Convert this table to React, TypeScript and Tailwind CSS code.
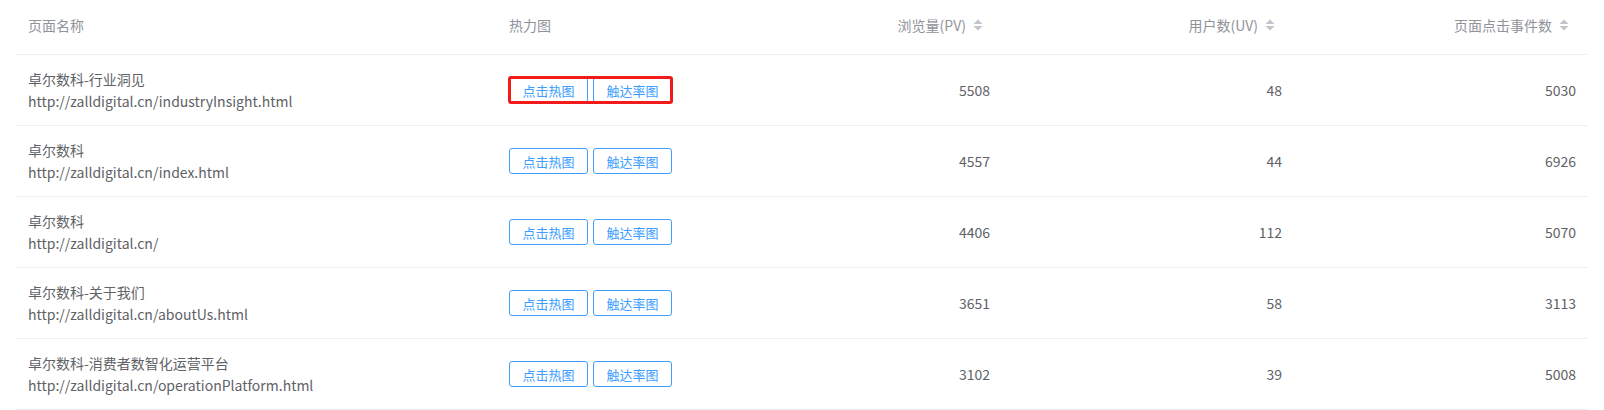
import React from "react";

type Row = { name: string; url: string; pv: number; uv: number; clicks: number; highlight?: boolean };

const rows: Row[] = [
  { name: "卓尔数科-行业洞见", url: "http://zalldigital.cn/industryInsight.html", pv: 5508, uv: 48, clicks: 5030, highlight: true },
  { name: "卓尔数科", url: "http://zalldigital.cn/index.html", pv: 4557, uv: 44, clicks: 6926 },
  { name: "卓尔数科", url: "http://zalldigital.cn/", pv: 4406, uv: 112, clicks: 5070 },
  { name: "卓尔数科-关于我们", url: "http://zalldigital.cn/aboutUs.html", pv: 3651, uv: 58, clicks: 3113 },
  { name: "卓尔数科-消费者数智化运营平台", url: "http://zalldigital.cn/operationPlatform.html", pv: 3102, uv: 39, clicks: 5008 },
];

function SortCaret() {
  return (
    <svg width="24" height="14" viewBox="0 0 24 14" className="shrink-0">
      <path d="M7.5 6 L12 1.5 L16.5 6 Z" fill="#c0c4cc" />
      <path d="M7.5 8 L12 12.5 L16.5 8 Z" fill="#c0c4cc" />
    </svg>
  );
}

const grid = "grid grid-cols-[481px_252px_253px_292px_294px]";

export default function App() {
  return (
    <div
      className="w-[1604px] h-[410px] bg-white px-4"
      style={{ fontFamily: '"Noto Sans CJK SC", "Noto Sans", sans-serif' }}
    >
      <div className={`${grid} h-[55px] border-b border-[#ebeef5] text-[14px] text-[#909399] pb-[4px]`}>
        <div className="flex items-center pl-3">页面名称</div>
        <div className="flex items-center pl-3">热力图</div>
        <div className="flex items-center justify-end pr-3">
          <span>浏览量(PV)</span>
          <SortCaret />
        </div>
        <div className="flex items-center justify-end pr-3">
          <span>用户数(UV)</span>
          <SortCaret />
        </div>
        <div className="flex items-center justify-end pr-3">
          <span>页面点击事件数</span>
          <SortCaret />
        </div>
      </div>
      {rows.map((r, i) => (
        <div key={i} className={`${grid} h-[71px] border-b border-[#ebeef5] text-[14px] text-[#606266]`}>
          <div className="flex flex-col justify-center pl-3 leading-[22px]">
            <div>{r.name}</div>
            <div>{r.url}</div>
          </div>
          <div className="flex items-center pl-3">
            <div className="relative flex gap-[5px]">
              <button className="w-[79px] h-[26px] rounded-[3px] border border-[#409eff] bg-white text-[13px] text-[#409eff] leading-none">
                点击热图
              </button>
              <button className="w-[79px] h-[26px] rounded-[3px] border border-[#409eff] bg-white text-[13px] text-[#409eff] leading-none">
                触达率图
              </button>
              {r.highlight && (
                <div className="absolute -inset-px rounded-[3px] border-[3px] border-[#f21b1b]" />
              )}
            </div>
          </div>
          <div className="flex items-center justify-end pr-3">{r.pv}</div>
          <div className="flex items-center justify-end pr-3">{r.uv}</div>
          <div className="flex items-center justify-end pr-3">{r.clicks}</div>
        </div>
      ))}
    </div>
  );
}
